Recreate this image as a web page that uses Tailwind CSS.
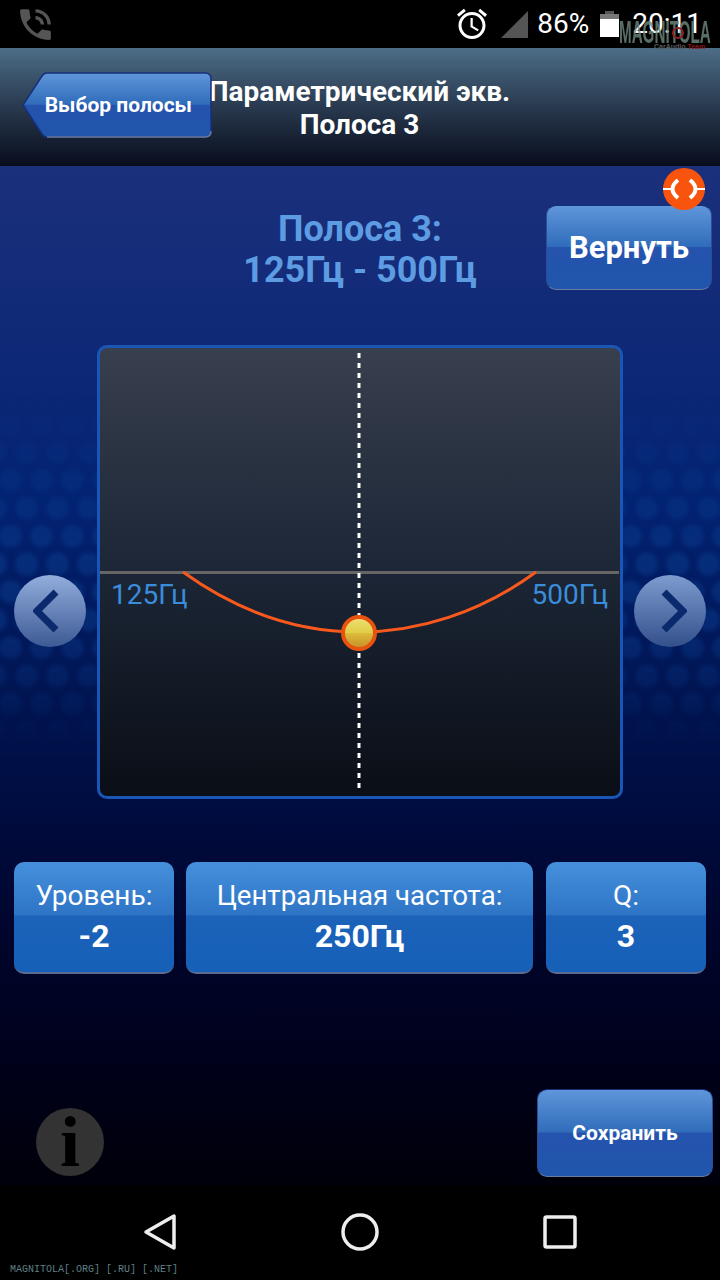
<!DOCTYPE html>
<html lang="en">
<head>
  <meta charset="UTF-8" />
  <meta name="viewport" content="width=device-width, initial-scale=1.0" />
  <title>Параметрический экв.</title>
  <script src="https://cdn.jsdelivr.net/npm/@tailwindcss/browser@4"></script>
</head>
<body class="bg-black text-white antialiased font-['Roboto',sans-serif]">
<div class="w-[720px] h-[1280px] flex flex-col overflow-hidden">

  <!-- Status bar -->
  <div class="relative h-12 shrink-0 bg-black flex items-center pl-[15px] pr-[18px]">
    <svg class="w-[41px] h-[41px]" viewBox="0 0 24 24" fill="#555"><path d="M20 15.5c-1.25 0-2.45-.2-3.57-.57-.35-.11-.74-.03-1.02.24l-2.2 2.2c-2.83-1.44-5.15-3.75-6.59-6.59l2.2-2.21c.28-.26.36-.65.25-1C8.7 6.45 8.5 5.25 8.5 4c0-.55-.45-1-1-1H4c-.55 0-1 .45-1 1 0 9.39 7.61 17 17 17 .55 0 1-.45 1-1v-3.5c0-.55-.45-1-1-1zM19 12h2c0-4.97-4.03-9-9-9v2c3.87 0 7 3.13 7 7zm-4 0h2c0-2.76-2.24-5-5-5v2c1.66 0 3 1.34 3 3z"/></svg>
    <div class="ml-auto flex items-center">
      <svg class="w-9 h-9" viewBox="0 0 24 24" fill="#fff"><path d="M22 5.72l-4.6-3.86-1.29 1.53 4.6 3.86L22 5.72zM7.88 3.39L6.6 1.86 2 5.71l1.29 1.53 4.59-3.85zM12.5 8H11v6l4.75 2.85.75-1.23-4-2.37V8zM12 4c-4.97 0-9 4.03-9 9s4.03 9 9 9c4.97 0 9-4.03 9-9s-4.03-9-9-9zm0 16c-3.87 0-7-3.13-7-7s3.13-7 7-7 7 3.13 7 7-3.13 7-7 7z"/></svg>
      <svg class="ml-[11px] w-[27px] h-[27px]" viewBox="0 0 27 27"><path d="M27 0V27H0Z" fill="#555"/></svg>
      <span class="ml-[9px] text-[28px] leading-none">86%</span>
      <svg class="ml-[11px] w-[19px] h-[26px]" viewBox="0 0 19 26"><path d="M5 0H14V3H5Z" fill="#555"/><path d="M0 3H19V8H0Z" fill="#777"/><path d="M0 8H19V26H0Z" fill="#fff"/></svg>
      <span class="ml-[13px] text-[28px] leading-none">20:11</span>
    </div>
    <!-- forum watermark -->
    <div class="absolute left-[619px] top-[18px] w-[94px] h-[30px] pointer-events-none">
      <span class="absolute left-0 top-0 origin-left scale-x-[0.49] text-[31px] leading-[30px] font-bold whitespace-nowrap text-[#6f8a7e]/80 font-['Liberation_Sans',sans-serif]">MAGNITOLA</span>
      <span class="absolute left-[35px] top-[25px] text-[7px] leading-[7px] font-bold whitespace-nowrap text-[#5a5a5a] font-['Liberation_Sans',sans-serif]">CarAudio <span class="text-[#8a1515]">Team</span></span>
      <span class="absolute left-[53px] top-[9px] w-3 h-3 rounded-full border-2 border-[#8e2020]"></span>
    </div>
  </div>

  <!-- Header -->
  <header class="h-[118px] shrink-0 bg-gradient-to-b from-[#4d6d87] to-[#090d1d] grid pt-6 pl-[22px]">
    <h1 class="col-start-1 row-start-1 -ml-[22px] pr-[1px] pt-[3px] text-center text-[28px] leading-[33px] font-bold whitespace-nowrap">Параметрический экв.<br />Полоса 3</h1>
    <div class="col-start-1 row-start-1 relative w-[190px] h-[66px] flex items-center justify-end pr-[20px]">
      <svg class="absolute inset-0" width="190" height="66" viewBox="0 0 190 66">
        <defs>
          <linearGradient id="back" x1="0" y1="0" x2="0" y2="1">
            <stop offset="0" stop-color="#6096da" />
            <stop offset="0.49" stop-color="#2f6cba" />
            <stop offset="0.5" stop-color="#2553ae" />
            <stop offset="1" stop-color="#2056ab" />
          </linearGradient>
        </defs>
        <path d="M25 1H183Q189 1 189 7V59Q189 65 183 65H25Q22 65 20 62L1 33L20 4Q22 1 25 1Z" fill="url(#back)" stroke="#16307a" stroke-width="1.5" />
        <path d="M25 65H183Q189 65 189 59" fill="none" stroke="#6a7ba0" stroke-width="1.5" />
      </svg>
      <span class="relative text-[21px] leading-none font-bold whitespace-nowrap">Выбор полосы</span>
    </div>
  </header>

  <!-- Main area -->
  <main class="relative h-[1020px] shrink-0 bg-gradient-to-b from-[#1b307c] via-[#022272] via-[33%] to-[#00000a] overflow-hidden">
    <!-- dotted backdrop -->
    <div class="absolute left-0 right-0 top-[230px] h-[350px] opacity-35 [mask-image:linear-gradient(to_bottom,transparent,black_45%,black_65%,transparent)] bg-[radial-gradient(circle,#0f4a9c_0,#0f4a9c_25%,transparent_45%),radial-gradient(circle,#0f4a9c_0,#0f4a9c_25%,transparent_45%)] bg-[length:31px_56px,31px_56px] bg-[position:-5px_0,11px_28px]"></div>

    <div class="relative">
      <!-- Title row -->
      <div class="grid grid-cols-[1fr_auto_1fr] pt-[39px]">
        <div></div>
        <div class="pt-[4px] -mb-px text-center text-[36px] leading-[41px] font-bold text-[#5d9ce2] whitespace-nowrap">
          <p>Полоса 3:</p>
          <p>125Гц - 500Гц</p>
        </div>
        <div class="flex justify-end pr-2">
          <div class="relative w-[166px] h-[85px] rounded-[10px] border border-t-[#16307a] border-x-[#2b4d95] border-b-[#6a7ba0] bg-[linear-gradient(to_bottom,#6096da_0%,#2f6cba_49%,#2553ae_50%,#2056ab_100%)] flex items-center justify-center">
            <span class="text-[31px] leading-none font-bold">Вернуть</span>
            <svg class="absolute -top-[38px] right-[6px] w-[42px] h-[42px]" viewBox="0 0 42 42">
              <circle cx="21" cy="21" r="21" fill="#f9540d" />
              <path d="M15 12Q4 21 15 30M27 12Q38 21 27 30" fill="none" stroke="#fff" stroke-width="4" />
              <path d="M0 21H8M34 21H42" stroke="#fff" stroke-width="2" />
            </svg>
          </div>
        </div>
      </div>

      <!-- Graph row -->
      <div class="mt-[55px] pl-[14px] flex items-start">
        <button class="mt-[230px] w-[72px] h-[72px] rounded-full bg-gradient-to-b from-[#93aedd] to-[#3e5a94] flex items-center justify-center">
          <svg width="34" height="50" viewBox="0 0 34 50"><path d="M23 6L4 25L23 44" fill="none" stroke="#0b2a6e" stroke-width="7" /></svg>
        </button>
        <div class="ml-[11px] relative w-[526px] h-[454px] rounded-[10px] border-[3px] border-[#1a56b5] bg-gradient-to-b from-[#383f4e] via-[#1c2636] via-[50%] to-[#0a0e16]">
          <div class="absolute left-0 right-px top-[223px] h-[3px] bg-[#666]"></div>
          <span class="absolute left-[11px] top-[231px] text-[28px] leading-[32px] text-[#3a8ddb]">125Гц</span>
          <span class="absolute right-[12px] top-[231px] text-[28px] leading-[32px] text-[#3a8ddb]">500Гц</span>
          <svg class="absolute inset-0" width="520" height="448" viewBox="0 0 520 448">
            <defs>
              <linearGradient id="knob" x1="0" y1="0" x2="0" y2="1">
                <stop offset="0" stop-color="#efe27a" />
                <stop offset="0.5" stop-color="#e0cc44" />
                <stop offset="0.52" stop-color="#dcb93a" />
                <stop offset="1" stop-color="#c58d28" />
              </linearGradient>
            </defs>
            <line x1="259" y1="5" x2="259" y2="443" stroke="#fff" stroke-width="3" stroke-dasharray="5 5" />
            <path d="M83 224C140 265 200 284 259 284C318 284 380 265 436 224" fill="none" stroke="#f9591c" stroke-width="3" />
            <circle cx="259" cy="285" r="16" fill="url(#knob)" stroke="#e8520f" stroke-width="4" />
          </svg>
        </div>
        <button class="ml-[11px] mt-[230px] w-[72px] h-[72px] rounded-full bg-gradient-to-b from-[#7f9ccf] to-[#34508c] flex items-center justify-center">
          <svg width="34" height="50" viewBox="0 0 34 50"><path d="M11 6L30 25L11 44" fill="none" stroke="#0b2a6e" stroke-width="7" /></svg>
        </button>
      </div>

      <!-- Value buttons -->
      <div class="mt-[63px] pl-[14px] flex gap-[12px] text-center">
        <div class="w-[160px] h-[112px] rounded-[10px] border-b-2 border-[#5a6a90] bg-[linear-gradient(to_bottom,#4590dc_0%,#2e74c6_48%,#1c62b9_49%,#1660b8_100%)] pt-[17px]">
          <p class="text-[28px] leading-[34px]">Уровень:</p>
          <p class="mt-[6px] text-[32px] leading-[34px] font-bold">-2</p>
        </div>
        <div class="w-[347px] h-[112px] rounded-[10px] border-b-2 border-[#5a6a90] bg-[linear-gradient(to_bottom,#4590dc_0%,#2e74c6_48%,#1c62b9_49%,#1660b8_100%)] pt-[17px]">
          <p class="text-[27.6px] leading-[34px]">Центральная частота:</p>
          <p class="mt-[6px] text-[32px] leading-[34px] font-bold">250Гц</p>
        </div>
        <div class="ml-px w-[160px] h-[112px] rounded-[10px] border-b-2 border-[#5a6a90] bg-[linear-gradient(to_bottom,#4590dc_0%,#2e74c6_48%,#1c62b9_49%,#1660b8_100%)] pt-[17px]">
          <p class="text-[28px] leading-[34px]">Q:</p>
          <p class="mt-[6px] text-[32px] leading-[34px] font-bold">3</p>
        </div>
      </div>

      <!-- Bottom row -->
      <div class="mt-[115px] pl-9 pr-[7px] flex items-end justify-between">
        <div class="mb-px w-[68px] h-[68px] rounded-full bg-[#333] flex items-center justify-center">
          <span class="text-[72px] leading-none font-bold text-black font-['Liberation_Serif',serif]">i</span>
        </div>
        <div class="w-[176px] h-[88px] rounded-[10px] border border-t-[#16307a] border-x-[#2b4d95] border-b-[#6a7ba0] bg-[linear-gradient(to_bottom,#6096da_0%,#2f6cba_49%,#2553ae_50%,#2056ab_100%)] flex items-center justify-center">
          <span class="text-[21px] leading-none font-bold">Сохранить</span>
        </div>
      </div>
    </div>
  </main>

  <!-- Navigation bar -->
  <nav class="relative h-[94px] shrink-0 bg-black">
    <div class="h-[92px] flex items-center justify-center gap-[164px]">
      <svg width="34" height="38" viewBox="0 0 34 38"><path d="M31 3V35L3 19Z" fill="none" stroke="#eee" stroke-width="3.5" stroke-linejoin="round" /></svg>
      <svg width="38" height="38" viewBox="0 0 38 38"><circle cx="19" cy="19" r="17" fill="none" stroke="#eee" stroke-width="3.5" /></svg>
      <svg width="34" height="34" viewBox="0 0 34 34"><rect x="2" y="2" width="30" height="30" rx="1.5" fill="none" stroke="#eee" stroke-width="3.5" /></svg>
    </div>
    <span class="absolute left-[10px] bottom-[5px] text-[10px] leading-none text-[#5f7f85] font-['Liberation_Mono',monospace]">MAGNITOLA[.ORG] [.RU] [.NET]</span>
  </nav>
</div>
</body>
</html>
